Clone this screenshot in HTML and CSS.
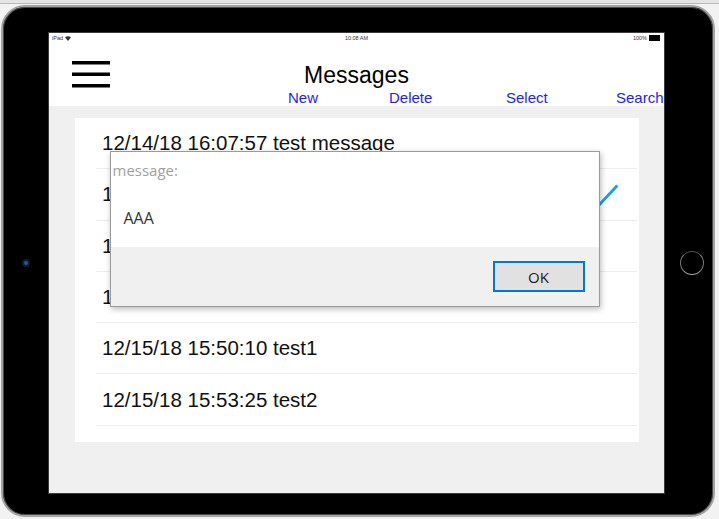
FILE: index.html
```html
<!DOCTYPE html>
<html lang="en">
<head>
<meta charset="utf-8">
<title>Messages</title>
<link rel="stylesheet" href="styles.css">
</head>
<body>
<div class="device">
  <div class="side side-left"><span class="camera"></span></div>
  <div class="screen">
    <div class="statusbar">
      <span class="sb-left">iPad <svg class="wifi" width="6" height="5" viewBox="0 0 6 5"><path d="M0 1.2 Q3 -0.8 6 1.2 L3 5 Z" fill="#333"/></svg></span>
      <span class="sb-time">10:08 AM</span>
      <span class="sb-right">100% <span class="battery"></span></span>
    </div>
    <header class="header">
      <div class="titlebar">
        <svg class="menu" width="38" height="28" viewBox="0 0 38 28">
          <rect x="0" y="0" width="38" height="3.5" fill="#000"/>
          <rect x="0" y="11.5" width="38" height="3.5" fill="#000"/>
          <rect x="0" y="23" width="38" height="3.5" fill="#000"/>
        </svg>
        <h1 class="title">Messages</h1>
        <span class="spacer"></span>
      </div>
      <nav class="toolbar">
        <span class="tool">New</span>
        <span class="tool">Delete</span>
        <span class="tool">Select</span>
        <span class="tool">Search</span>
      </nav>
    </header>
    <main class="content">
      <ul class="list">
        <li class="row"><span>12/14/18 16:07:57 test message</span></li>
        <li class="row"><span>12/14/18 16:12:03 hello</span>
          <svg class="check" width="32" height="30" viewBox="0 0 32 30"><path d="M2 18 L11 27.2 L30.3 6.5" fill="none" stroke="#1ba1e2" stroke-width="3"/></svg>
        </li>
        <li class="row"><span>12/15/18 09:21:44 note</span></li>
        <li class="row"><span>12/15/18 10:02:18 AAA</span></li>
        <li class="row"><span>12/15/18 15:50:10 test1</span></li>
        <li class="row"><span>12/15/18 15:53:25 test2</span></li>
      </ul>
    </main>
    <div class="dialog">
      <div class="dialog-body">
        <div class="dialog-label">message:</div>
        <div class="dialog-text">AAA</div>
      </div>
      <div class="dialog-footer">
        <button class="btn-ok">OK</button>
      </div>
    </div>
  </div>
  <div class="side side-right"><span class="home"></span></div>
</div>
</body>
</html>
```
FILE: styles.css
```css
html {
  background: #f2f2f2;
}
body {
  margin: 0;
  width: 719px;
  height: 519px;
  overflow: hidden;
  background: linear-gradient(#e4e4e4 0, #e4e4e4 3px, #b9b9b9 3px, #b9b9b9 4px, #f2f2f2 4px);
}
.device {
  margin: 5px 0 0 1px;
  width: 714px;
  height: 512px;
  box-sizing: border-box;
  border: 2px solid #a3a3a3;
  border-radius: 24px;
  background: #000;
  padding: 25px 0 21px 0;
  display: flex;
  box-shadow: inset 0 0 0 1px #4a4a4a;
}
.side {
  display: flex;
  align-items: center;
  justify-content: center;
}
.side-left { width: 45px; }
.side-right { width: 48px; box-sizing: border-box; padding-left: 5px; }
.camera {
  width: 4px;
  height: 4px;
  border-radius: 50%;
  background: #1f58a8;
  box-shadow: 0 0 0 2px #161b24;
}
.home {
  width: 24px;
  height: 24px;
  box-sizing: border-box;
  border-radius: 50%;
  border: 1.5px solid #707070;
  border-color: #555 #7a7a7a #a5a5a5 #7a7a7a;
}
.screen {
  width: 617px;
  height: 462px;
  box-sizing: border-box;
  border: 1px solid #3c3c3c;
  background: #fff;
  position: relative;
  overflow: hidden;
  display: flex;
  flex-direction: column;
}
.statusbar {
  height: 10px;
  display: grid;
  grid-template-columns: 1fr auto 1fr;
  align-items: center;
  padding: 0 3px;
  font: 5.5px/10px "Liberation Sans", sans-serif;
  color: #333;
}
.sb-left { display: flex; align-items: center; gap: 2px; }
.wifi { display: block; }
.sb-right { display: flex; align-items: center; justify-content: flex-end; gap: 2px; padding-right: 1px; }
.battery {
  width: 9px;
  height: 3.5px;
  background: #000;
  border: 0.5px solid #000;
}
.header {
  padding-top: 18px;
}
.titlebar {
  display: grid;
  grid-template-columns: 1fr auto 1fr;
  height: 28px;
}
.menu {
  display: block;
  margin-left: 23px;
}
.title {
  margin: 0;
  font: 400 23px/28px "Liberation Sans", Arial, sans-serif;
  color: #000;
}
.toolbar {
  display: grid;
  grid-template-columns: 101px 117px 110px auto;
  padding-left: 239px;
  font: 15px/17px "Liberation Sans", Arial, sans-serif;
  color: #1e1ef5;
  white-space: nowrap;
}
.content {
  flex: 1;
  background: #f0f0f0;
  padding: 12px 25px 0 26px;
}
.list {
  margin: 0;
  padding: 0 2px 16px 21px;
  list-style: none;
  background: #fff;
}
.row {
  height: 50.3px;
  border-bottom: 1px solid #ededed;
  display: flex;
  align-items: center;
  justify-content: space-between;
  padding-left: 6px;
  font: 20.5px "Liberation Sans", Arial, sans-serif;
  color: #111;
  white-space: nowrap;
}
.check {
  display: block;
  margin-right: 18px;
}
.dialog {
  position: absolute;
  left: 60.5px;
  top: 118px;
  width: 490px;
  height: 156px;
  box-sizing: border-box;
  border: 1px solid #9a9a9a;
  background: #fff;
  box-shadow: 1px 2px 6px rgba(0, 0, 0, 0.28);
  display: flex;
  flex-direction: column;
  font-family: "Open Sans", "Noto Sans", sans-serif;
}
.dialog-body {
  flex: 1;
  padding: 7.5px 0 0 2px;
}
.dialog-label {
  font-size: 15px;
  line-height: 20px;
  color: #a0a0a0;
}
.dialog-text {
  margin-top: 28px;
  padding-left: 11px;
  font-size: 16px;
  line-height: 20px;
  color: #333;
}
.dialog-footer {
  height: 59px;
  background: #f0f0f0;
  display: flex;
  align-items: center;
  justify-content: flex-end;
  padding-right: 14px;
}
.btn-ok {
  width: 92px;
  height: 31px;
  box-sizing: border-box;
  border: 2px solid #0078d7;
  background: #e1e1e1;
  font: 15px "Open Sans", "Noto Sans", sans-serif;
  color: #1a1a1a;
  padding: 0;
}
```
